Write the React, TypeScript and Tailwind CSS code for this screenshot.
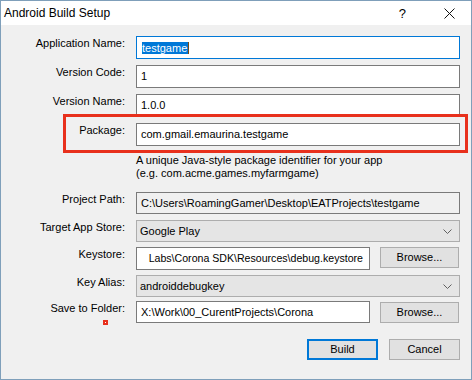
import { ReactNode } from "react";

function Label({ children }: { children: ReactNode }) {
  return (
    <div className="w-[125px] shrink-0 text-right pt-[1px] leading-[13px] pr-[1px]">{children}</div>
  );
}

function Row({ label, className = "", children }: { label: string; className?: string; children: ReactNode }) {
  return (
    <div className={`flex items-start gap-[10px] ${className}`}>
      <Label>{label}</Label>
      {children}
    </div>
  );
}

function TextBox({ value, className = "" }: { value: string; className?: string }) {
  return (
    <div
      className={`h-[23px] border border-[#7a7a7a] bg-white flex items-center pl-[4px] whitespace-nowrap overflow-hidden ${className}`}
    >
      {value}
    </div>
  );
}

function Combo({ value }: { value: string }) {
  return (
    <div className="w-[324px] h-[22px] border border-[#adadad] bg-[#e5e5e5] flex items-center justify-between pl-[3px] pr-[7px]">
      <span>{value}</span>
      <svg width="9" height="5" viewBox="0 0 9 5" aria-hidden="true">
        <path d="M0.5 0.5 L4.5 4.5 L8.5 0.5" fill="none" stroke="#606060" strokeWidth="1" />
      </svg>
    </div>
  );
}

function Btn({ children, primary = false, className = "" }: { children: ReactNode; primary?: boolean; className?: string }) {
  return (
    <button
      className={`h-[21px] w-[79px] bg-[#e1e1e1] flex items-center justify-center ${
        primary ? "border-2 border-[#0078d7]" : "border border-[#adadad]"
      } ${className}`}
    >
      {children}
    </button>
  );
}

export default function App() {
  return (
    <div className="relative w-[472px] h-[380px] border border-[#7f9fba] bg-[#f0f0f0] text-black text-[11px] font-['Liberation_Sans',Arial,sans-serif] flex flex-col">
      {/* title bar */}
      <div className="h-[24px] bg-white flex items-center justify-between pl-[3px] shrink-0">
        <span className="text-[12px] text-black">Android Build Setup</span>
        <div className="flex items-center gap-[38px] pr-[16px]">
          <span className="text-[13px] leading-none">?</span>
          <svg width="11" height="11" viewBox="0 0 11 11" aria-hidden="true">
            <path d="M0.5 0.5 L10.5 10.5 M10.5 0.5 L0.5 10.5" stroke="#111" strokeWidth="1" />
          </svg>
        </div>
      </div>

      {/* form */}
      <div className="flex flex-col pt-[11px]">
        <Row label="Application Name:">
          <div className="w-[324px] h-[23px] border border-[#0078d7] bg-white flex items-center pl-[5px]">
            <span className="bg-[#0078d7] text-white leading-[12px] h-[12px] pr-[1px]">testgame</span>
            <span className="w-[1px] h-[12px] bg-[#7a4a10]" />
          </div>
        </Row>
        <Row label="Version Code:" className="mt-[6px]">
          <TextBox value="1" className="w-[324px]" />
        </Row>
        <Row label="Version Name:" className="mt-[6px]">
          <TextBox value="1.0.0" className="w-[324px]" />
        </Row>
        <Row label="Package:" className="mt-[6px]">
          <TextBox value="com.gmail.emaurina.testgame" className="w-[324px]" />
        </Row>
        <div className="ml-[135px] mt-[8px] leading-[13px]">
          <p>A unique Java-style package identifier for your app</p>
          <p>(e.g. com.acme.games.myfarmgame)</p>
        </div>
        <Row label="Project Path:" className="mt-[12px]">
          <TextBox
            value="C:\Users\RoamingGamer\Desktop\EATProjects\testgame"
            className="w-[324px] !h-[22px] !bg-[#f0f0f0]"
          />
        </Row>
        <Row label="Target App Store:" className="mt-[6px]">
          <Combo value="Google Play" />
        </Row>
        <Row label="Keystore:" className="mt-[5px]">
          <div className="w-[234px] h-[23px] border border-[#7a7a7a] bg-white flex items-center justify-end pr-[6px] whitespace-nowrap">
            <span className="text-[10.6px]">Labs\Corona SDK\Resources\debug.keystore</span>
          </div>
          <Btn>Browse...</Btn>
        </Row>
        <Row label="Key Alias:" className="mt-[5px]">
          <Combo value="androiddebugkey" />
        </Row>
        <Row label="Save to Folder:" className="mt-[4px]">
          <TextBox value="X:\Work\00_CurentProjects\Corona" className="w-[234px] !h-[22px]" />
          <Btn className="mt-[1px]">Browse...</Btn>
        </Row>
        <div className="flex justify-end gap-[11px] pr-[11px] mt-[16px]">
          <Btn primary className="!w-[71px]">Build</Btn>
          <Btn className="!w-[71px]">Cancel</Btn>
        </div>
      </div>

      {/* annotation overlays */}
      <div className="absolute left-[62px] top-[113px] w-[405px] h-[39px] border-[3px] border-[#e8301c] pointer-events-none" />
      <div className="absolute left-[102px] top-[319px] w-[5px] h-[5px] bg-[#e8301c] flex items-center justify-center">
        <div className="w-[1px] h-[1px] bg-white" />
      </div>
    </div>
  );
}
